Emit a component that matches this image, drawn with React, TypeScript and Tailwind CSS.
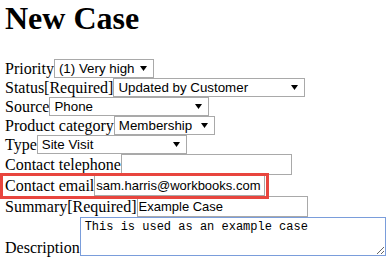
import React from 'react';

function Caret() {
  return (
    <svg width="7" height="5" viewBox="0 0 7 5" className="shrink-0 -mt-[1px]">
      <polygon points="0,0 7,0 3.5,5" fill="#000" />
    </svg>
  );
}

function FakeSelect({ value, className }: { value: string; className: string }) {
  return (
    <div
      className={`flex h-[19px] shrink-0 items-center justify-between border border-[#a9a9a9] bg-white pl-[4px] pr-[6px] font-['Liberation_Sans',Arial,sans-serif] text-[13.33px] leading-[17px] text-black ${className}`}
    >
      <span className="whitespace-nowrap">{value}</span>
      <Caret />
    </div>
  );
}

function Label({ children }: { children: React.ReactNode }) {
  return <span className="whitespace-nowrap text-[16px] leading-[19px]">{children}</span>;
}

const inputCls =
  "h-[21px] w-[171px] shrink-0 border border-[#a9a9a9] bg-white px-[1px] font-['Liberation_Sans',Arial,sans-serif] text-[13px] text-black outline-none";

export default function App() {
  return (
    <div className="min-h-screen bg-white pl-[5px] font-['Liberation_Serif','Times_New_Roman',serif] text-black">
      <h1 className="mb-[22px] h-[37px] text-[32px] font-bold leading-[37px]">New Case</h1>

      <div className="flex flex-col">
        <div className="flex h-[19px] items-center">
          <Label>Priority</Label>
          <FakeSelect value="(1) Very high" className="w-[100px]" />
        </div>
        <div className="flex h-[19px] items-center">
          <Label>Status[Required]</Label>
          <FakeSelect value="Updated by Customer" className="w-[192px]" />
        </div>
        <div className="flex h-[19px] items-center">
          <Label>Source</Label>
          <FakeSelect value="Phone" className="w-[160px]" />
        </div>
        <div className="flex h-[19px] items-center">
          <Label>Product category</Label>
          <FakeSelect value="Membership" className="w-[101px]" />
        </div>
        <div className="flex h-[19px] items-center">
          <Label>Type</Label>
          <FakeSelect value="Site Visit" className="w-[150px]" />
        </div>
        <div className="flex h-[21px] items-center">
          <Label>Contact telephone</Label>
          <input className={inputCls} defaultValue="" />
        </div>
        <div className="relative flex h-[21px] items-center">
          <Label>Contact email</Label>
          <input className={inputCls} defaultValue="sam.harris@workbooks.com" />
          {/* highlight annotation */}
          <div className="pointer-events-none absolute left-[-5px] top-[-2px] h-[26px] w-[269px] border-[3px] border-[#e8453e]" />
        </div>
        <div className="flex h-[21px] items-center">
          <Label>Summary[Required]</Label>
          <input className={inputCls} defaultValue="Example Case" />
        </div>
        <div className="flex items-end">
          <span className="mb-[-1px] whitespace-nowrap text-[16px] leading-[19px]">Description</span>
          <textarea
            className="h-[39px] w-[306px] shrink-0 resize border border-[#7a9ddb] bg-white px-[4px] py-[2px] font-['Liberation_Mono','Courier_New',monospace] text-[12px] leading-[14px] text-black outline-none"
            defaultValue="This is used as an example case"
          />
        </div>
      </div>
    </div>
  );
}
